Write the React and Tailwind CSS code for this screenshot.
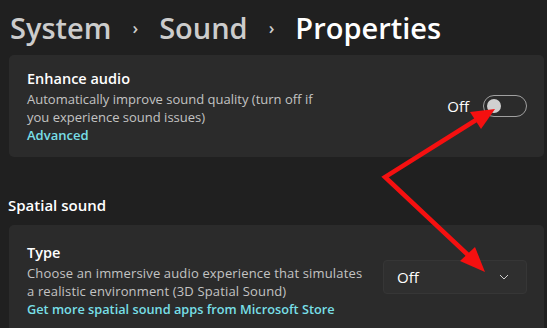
import React from "react";

function Toggle() {
  return (
    <div className="flex items-center gap-[14px]">
      <span className="text-[15px] text-white leading-none">Off</span>
      <div className="w-[44px] h-[22px] rounded-full border border-[#a0a0a0] flex items-center px-[3px]">
        <div className="w-[14px] h-[14px] rounded-full bg-[#d0d0d0]" />
      </div>
    </div>
  );
}

function Dropdown() {
  return (
    <div className="w-[144px] h-[34px] rounded-[4px] bg-[#2f2f2f] border border-[#363636] flex items-center justify-between pl-[13px] pr-[17px]">
      <span className="text-[15px] text-white">Off</span>
      <svg width="10" height="6" viewBox="0 0 10 6" fill="none">
        <path d="M1 1 L5 5 L9 1" stroke="#cfcfcf" strokeWidth="1" />
      </svg>
    </div>
  );
}

export default function App() {
  return (
    <div
      className="relative w-[547px] h-[328px] overflow-hidden bg-[#202020]"
      style={{ fontFamily: '"Open Sans", "Noto Sans", sans-serif' }}
    >
      <div className="flex items-center gap-[21px] pl-[10px] pt-[6px] h-[48px] text-[29px] font-semibold leading-none">
        <span className="text-[#cccccc]">System</span>
        <span className="text-[#cccccc] text-[17px]">›</span>
        <span className="text-[#cccccc]">Sound</span>
        <span className="text-[#cccccc] text-[17px]">›</span>
        <span className="text-white">Properties</span>
      </div>

      <div className="ml-[9px] mr-[3px] mt-[7px] h-[102px] rounded-[5px] bg-[#2b2b2b] flex items-center justify-between pl-[18px] pr-[17px]">
        <div className="flex flex-col pt-[1px]">
          <div className="text-[14.5px] leading-[20px] font-semibold text-white">Enhance audio</div>
          <div className="text-[13px] leading-[18px] text-[#c3c3c3] whitespace-nowrap mt-[1px]">
            Automatically improve sound quality (turn off if
            <br />
            you experience sound issues)
          </div>
          <div className="text-[13px] leading-[18px] font-semibold text-[#78dfe6]">Advanced</div>
        </div>
        <Toggle />
      </div>

      <div className="pl-[8px] pt-[38px] h-[68px] text-[15px] leading-[20px] font-semibold text-white">
        Spatial sound
      </div>

      <div className="ml-[9px] mr-[3px] h-[110px] rounded-t-[5px] bg-[#2b2b2b] flex justify-between pl-[18px] pr-[17px] pt-[18px]">
        <div className="flex flex-col">
          <div className="text-[14.5px] leading-[20px] font-semibold text-white">Type</div>
          <div className="text-[13px] leading-[18px] text-[#c3c3c3] whitespace-nowrap mt-[1px] tracking-[0.15px]">
            Choose an immersive audio experience that simulates
            <br />
            a realistic environment (3D Spatial Sound)
          </div>
          <div className="text-[12.75px] leading-[18px] font-semibold text-[#78dfe6] whitespace-nowrap">
            Get more spatial sound apps from Microsoft Store
          </div>
        </div>
        <div className="pt-[17px]">
          <Dropdown />
        </div>
      </div>

      <svg className="absolute inset-0 pointer-events-none" width="547" height="328" viewBox="0 0 547 328">
        <polyline points="476,120 385,177 468,255" fill="none" stroke="#f51010" strokeWidth="4.5" strokeLinejoin="miter" />
        <polygon points="495,109 470,112 481,129" fill="#f51010" />
        <polygon points="485,272 475,247 460,261" fill="#f51010" />
      </svg>
    </div>
  );
}
